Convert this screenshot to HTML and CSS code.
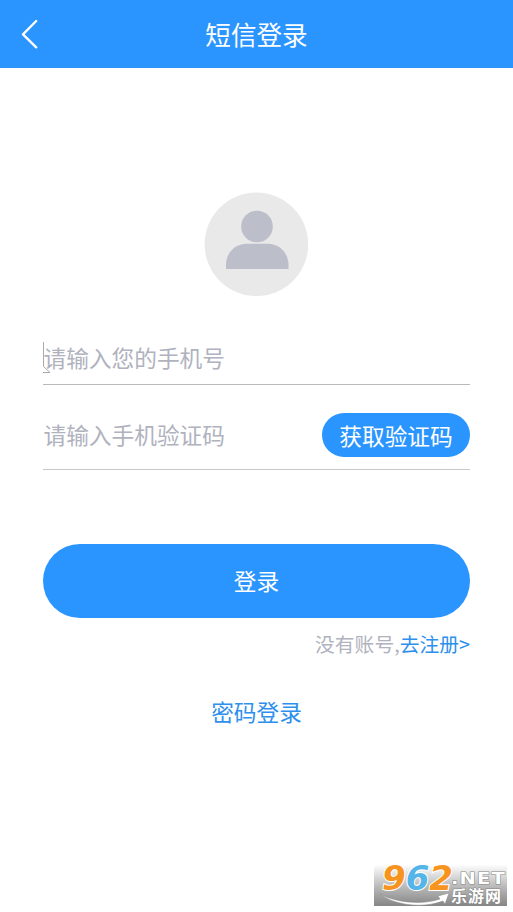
FILE: index.html
```html
<!DOCTYPE html>
<html lang="zh-CN">
<head>
<meta charset="utf-8">
<title>短信登录</title>
<link rel="stylesheet" href="styles.css">
</head>
<body>
<header class="header">
  <svg class="back" viewBox="0 0 18 30" width="18" height="30"><path d="M16.2 2 3 15.400 16.200 28.400" /></svg>
  <h1 class="title">短信登录</h1>
</header>
<main class="content">
  <svg class="avatar" viewBox="0 0 104 104" width="104" height="104">
    <circle cx="52.400" cy="52.300" r="51.800" fill="#e9e9e9"/>
    <circle cx="53" cy="34.5" r="15.8" fill="#bcbec9"/>
    <path d="M22 77V73C22 61 31 51.8 42.5 51.8H64C75.500 51.800 84.500 61 84.500 73V77Z" fill="#bcbec9"/>
  </svg>
  <div class="field field-phone">
    <span class="placeholder">请输入您的手机号</span>
    <svg class="caret" viewBox="0 0 8 32" width="8" height="32"><path d="M.5 0V24.500L7 30.500H0" /></svg>
  </div>
  <div class="field field-code">
    <span class="placeholder">请输入手机验证码</span>
    <button class="code-button">获取验证码</button>
  </div>
  <button class="login-button">登录</button>
  <p class="register">没有账号,<a class="link">去注册&gt;</a></p>
  <a class="password-login">密码登录</a>
</main>
<div class="watermark">
  <svg viewBox="0 0 133 41" width="133" height="41">
    <path d="M6 29C22 38 49 40 66 34L64 31 75 28 71 39 69 36C48 44 20 40 6 29Z" fill="#fff" stroke="#888" stroke-width=".5"/>
    <text class="digits" x="8" y="25" textLength="71" lengthAdjust="spacingAndGlyphs"><tspan class="orange">9</tspan><tspan class="blue">6</tspan><tspan class="orange">2</tspan></text>
    <text class="net" x="77" y="19" textLength="55" lengthAdjust="spacingAndGlyphs">.NET</text>
    <text class="cn" x="77" y="37" textLength="50">乐游网</text>
  </svg>
</div>
</body>
</html>
```
FILE: styles.css
```css
* { box-sizing: border-box; }
body {
  margin: 0;
  height: 912px;
  overflow: hidden;
  background: #fff;
  font-family: "Noto Sans CJK SC", sans-serif;
}
button {
  border: 0;
  padding: 0;
  color: #fff;
  background: #2b95ff;
  font-family: inherit;
}
.header {
  display: grid;
  grid-template-columns: 60px 1fr 60px;
  align-items: center;
  height: 68px;
  background: #2b95ff;
}
.back {
  margin-left: 20px;
  fill: none;
  stroke: #fff;
  stroke-width: 2.3;
  stroke-linecap: round;
  stroke-linejoin: round;
}
.title {
  margin: 0;
  color: #fff;
  font-size: 25.6px;
  font-weight: 400;
  line-height: 36px;
  text-align: center;
}
.content {
  display: flex;
  flex-direction: column;
  padding: 124px 43px 0;
}
.avatar {
  align-self: center;
  margin-right: 1px;
}
.field {
  position: relative;
  display: flex;
  justify-content: space-between;
  border-bottom: 1px solid #c8c8cc;
}
.field-phone {
  height: 43px;
  margin-top: 46px;
  border-bottom-color: #b8b8bd;
}
.field-code {
  height: 57px;
  margin-top: 28px;
}
.placeholder {
  padding-left: 0.5px;
  color: #b0b2be;
  font-size: 22.7px;
  line-height: 30px;
}
.field-phone .placeholder { margin-top: 1px; }
.field-code .placeholder { margin-top: 7px; }
.caret {
  position: absolute;
  left: 0;
  top: 0;
  fill: none;
  stroke: #a0a0a5;
  stroke-width: 0.9;
}
.code-button {
  width: 148px;
  height: 44px;
  padding-top: 1px;
  border-radius: 22px;
  font-size: 22.7px;
  line-height: 43px;
}
.login-button {
  height: 74px;
  margin-top: 74px;
  border-radius: 37px;
  font-size: 22.7px;
  line-height: 74px;
}
.register {
  margin: 12px 0 0;
  color: #b0b2be;
  font-size: 19.8px;
  line-height: 28px;
  text-align: right;
}
.link, .password-login { color: #2e90ec; }
.password-login {
  margin-top: 38px;
  font-size: 22.7px;
  line-height: 32px;
  text-align: center;
}
.watermark {
  position: absolute;
  left: 374px;
  top: 865px;
  width: 133px;
  height: 41px;
  background: linear-gradient(#fdfdfd, #bdbdbd 50%, #858585);
}
.watermark svg {
  display: block;
  overflow: visible;
}
.digits {
  font: italic 700 33px/1 "DejaVu Sans", sans-serif;
  paint-order: stroke;
  stroke: #fff;
  stroke-width: 2px;
}
.orange { fill: #f79420; }
.blue { fill: #55b4e8; }
.net, .cn {
  fill: #fff;
  stroke: #858585;
  stroke-width: 1px;
  paint-order: stroke;
}
.net {
  font: 700 16px/1 "DejaVu Sans", sans-serif;
  letter-spacing: 1px;
}
.cn { font: 700 16px/1 "Noto Sans CJK SC", sans-serif; }
```
